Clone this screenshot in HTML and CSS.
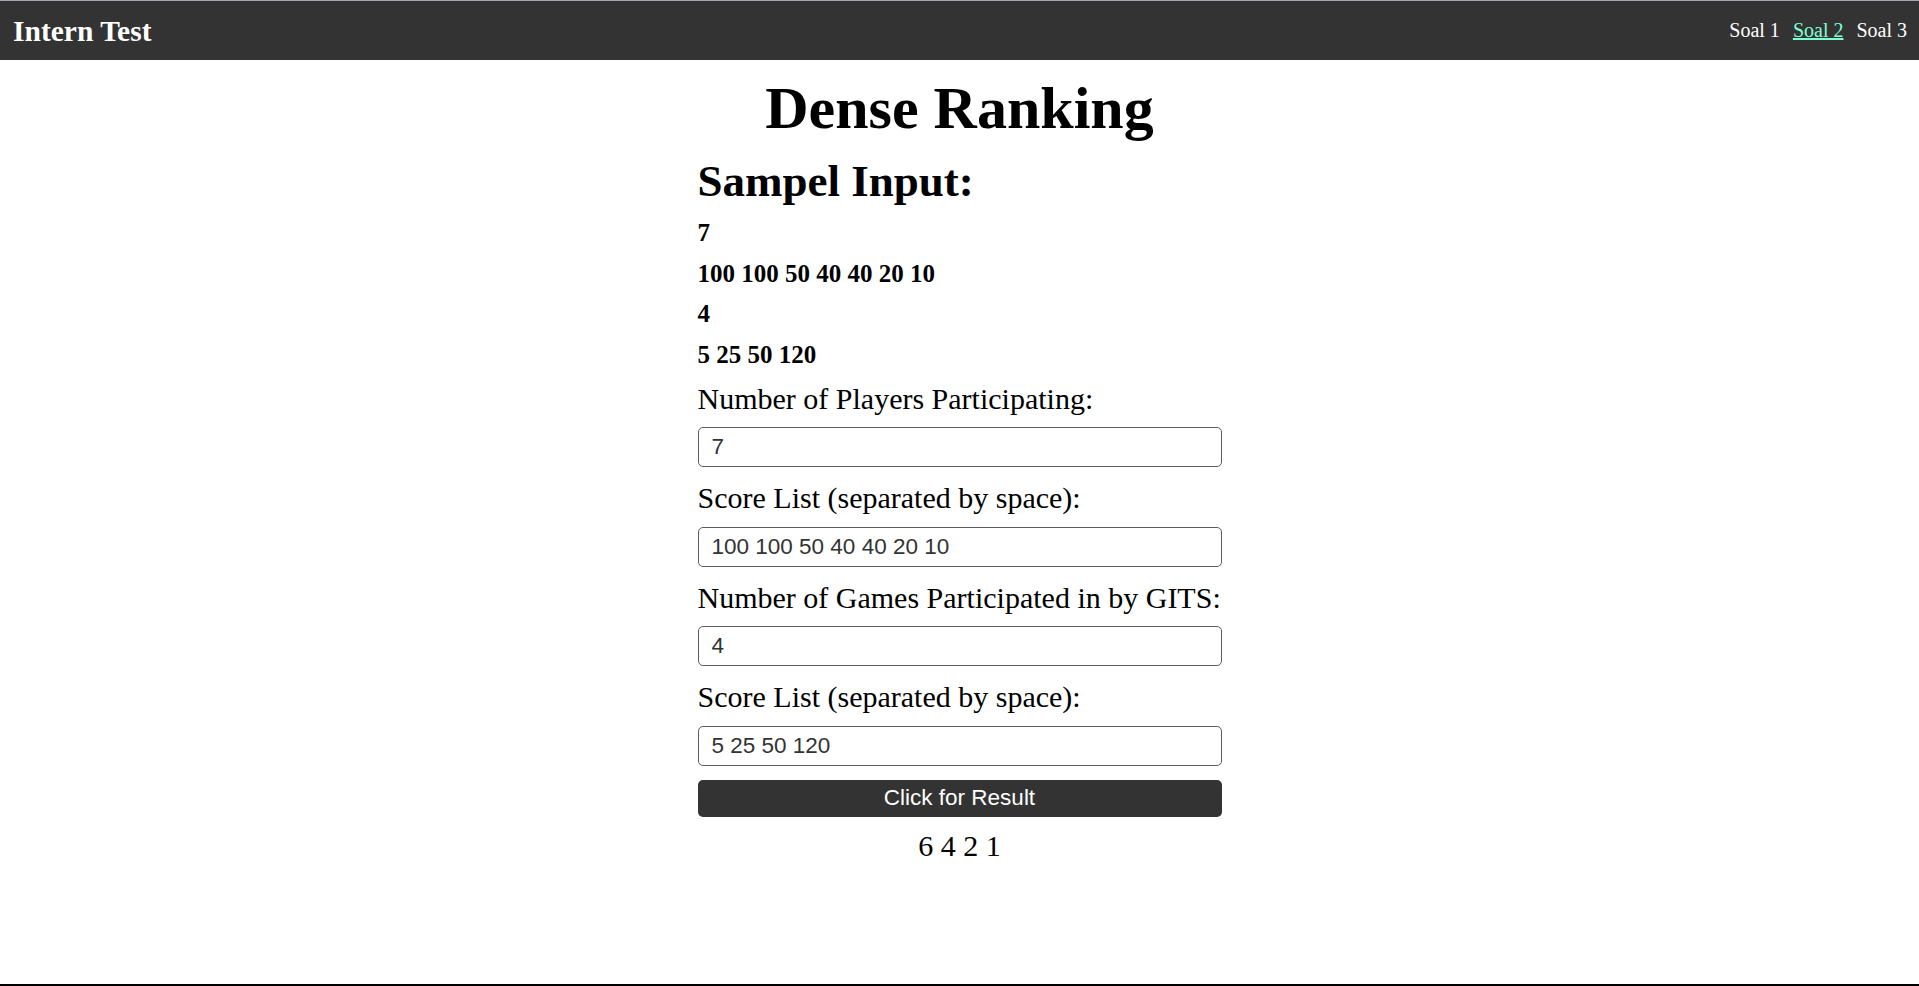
FILE: index.html
```html
<!DOCTYPE html>
<html lang="en">
<head>
<meta charset="utf-8">
<title>Dense Ranking</title>
<link rel="stylesheet" href="styles.css">
</head>
<body>
  <nav class="navbar">
    <div class="brand">Intern Test</div>
    <div class="nav-links">
      <a class="nav-link" href="#">Soal 1</a>
      <a class="nav-link active" href="#">Soal 2</a>
      <a class="nav-link" href="#">Soal 3</a>
    </div>
  </nav>
  <main class="main">
    <div class="container">
      <h1 class="title">Dense Ranking</h1>
      <h2 class="subtitle">Sampel Input:</h2>
      <p class="sample">7</p>
      <p class="sample">100 100 50 40 40 20 10</p>
      <p class="sample">4</p>
      <p class="sample">5 25 50 120</p>
      <label class="field-label">Number of Players Participating:</label>
      <input class="field-input" type="text" value="7">
      <label class="field-label">Score List (separated by space):</label>
      <input class="field-input" type="text" value="100 100 50 40 40 20 10">
      <label class="field-label">Number of Games Participated in by GITS:</label>
      <input class="field-input" type="text" value="4">
      <label class="field-label">Score List (separated by space):</label>
      <input class="field-input" type="text" value="5 25 50 120">
      <button class="submit" type="button">Click for Result</button>
      <p class="result">6 4 2 1</p>
    </div>
  </main>
  <footer class="footer"></footer>
</body>
</html>
```

FILE: styles.css
```css
html, body {
  margin: 0;
  padding: 0;
}

body {
  min-height: 100vh;
  box-sizing: border-box;
  border-top: 1px solid #a3a6b1;
  display: flex;
  flex-direction: column;
  background: #ffffff;
  color: #000000;
  font-family: "Liberation Serif", "Times New Roman", serif;
}

.navbar {
  height: 59px;
  background: #333333;
  display: flex;
  align-items: center;
  justify-content: space-between;
  padding: 0 12px 0 13px;
  flex-shrink: 0;
}

.brand {
  color: #ffffff;
  font-weight: bold;
  font-size: 29.5px;
  line-height: 34px;
  margin-top: 1px;
}

.nav-links {
  display: flex;
  gap: 13px;
  align-items: center;
}

.nav-link {
  color: #ffffff;
  font-size: 20px;
  line-height: 23px;
  text-decoration: none;
}

.nav-link.active {
  color: #7fffd4;
  text-decoration: underline;
}

.main {
  flex: 1;
}

.container {
  width: 524px;
  margin: 0 auto;
  display: flex;
  flex-direction: column;
}

.title {
  margin: 14px 0 0;
  font-size: 60px;
  line-height: 69px;
  text-align: center;
  font-weight: bold;
}

.subtitle {
  margin: 12px 0 0;
  font-size: 45px;
  line-height: 52px;
  font-weight: bold;
}

.sample {
  margin: 11px 0 0;
  font-size: 25px;
  line-height: 29px;
  font-weight: bold;
}

.sample + .sample {
  margin-top: 11.5px;
}

.field-label {
  display: block;
  margin: 12px 0 11.5px;
  font-size: 30px;
  line-height: 35px;
}

.field-input + .field-label {
  margin-top: 13px;
}

.field-input {
  display: block;
  box-sizing: border-box;
  width: 100%;
  height: 40px;
  margin: 0;
  padding: 0 13px;
  border: 1px solid #5c5c5c;
  border-radius: 5px;
  font-family: "Liberation Sans", Arial, sans-serif;
  font-size: 22.5px;
  color: #333333;
  background: #ffffff;
  outline: none;
}

.submit {
  display: block;
  box-sizing: border-box;
  width: 100%;
  height: 37px;
  margin: 14px 0 0;
  padding: 0;
  border: none;
  border-radius: 5px;
  background: #333333;
  color: #ffffff;
  font-family: "Liberation Sans", Arial, sans-serif;
  font-size: 22.5px;
  cursor: pointer;
}

.result {
  margin: 11px 0 0;
  font-size: 30px;
  line-height: 35px;
  text-align: center;
}

.footer {
  height: 2px;
  background: #000000;
  flex-shrink: 0;
}
```
